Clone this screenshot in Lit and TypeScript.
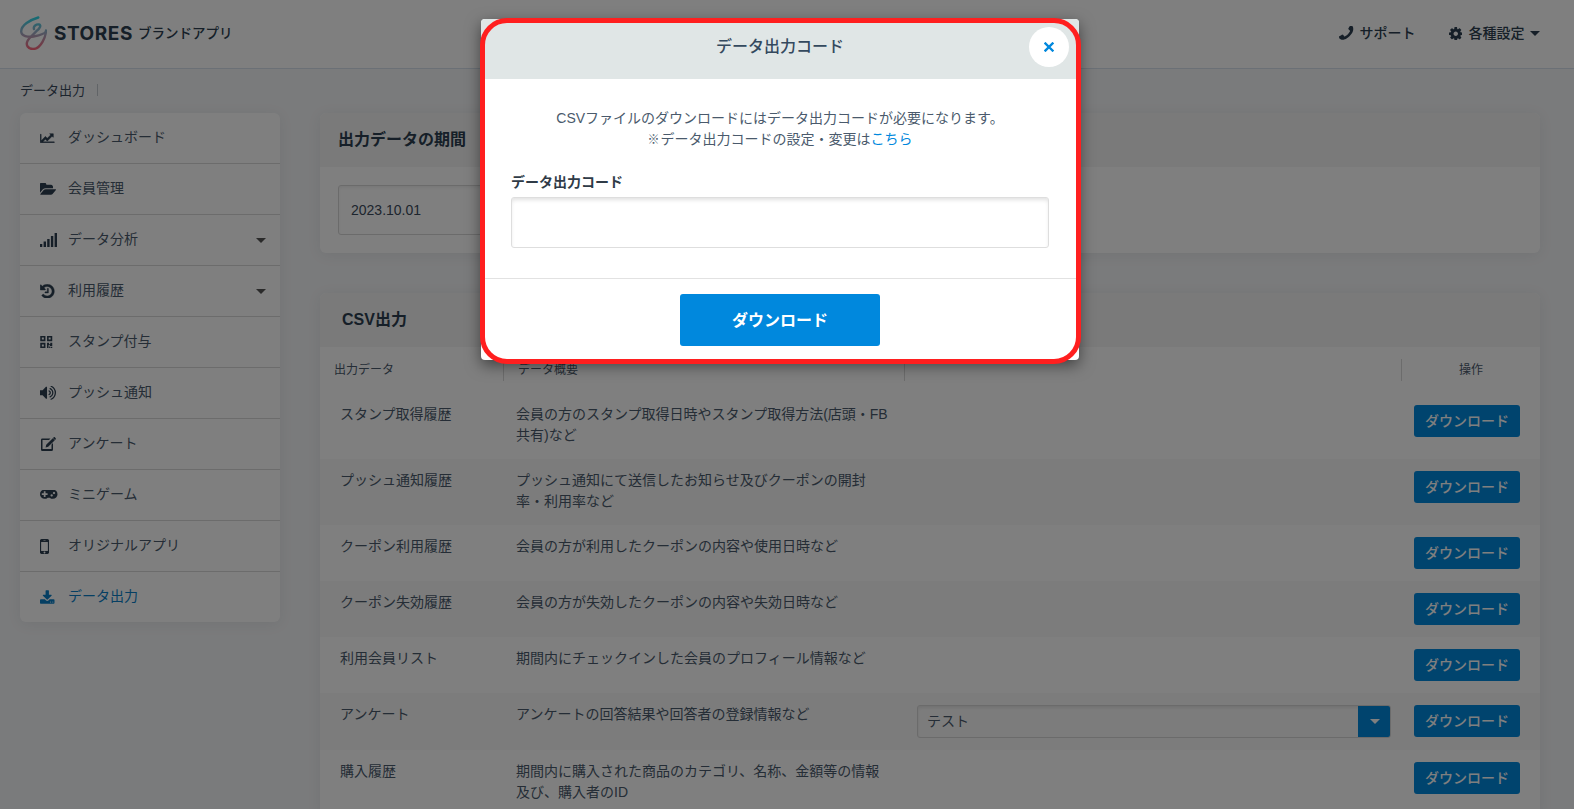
import { LitElement, css, html, svg } from 'lit';
import { customElement } from 'lit/decorators.js';

// Font Awesome 4 style glyphs, cropped tight so that w/h are the measured ink sizes.
// sw thickens a glyph that renders too light at this size.
const ICONS: Record<string, { vb: string; w: number; h: number; d: string; sw?: number }> = {
  chart: {
    vb: '-30 400 1980 1294', w: 14.5, h: 10.5, sw: 60,
    d: 'M1920 1536v128h-1920v-1152h128v1024h1792zm-128-1088v435q0 21-19.5 29.5t-35.5-7.5l-121-121-633 633q-10 10-23 10t-23-10l-233-233-416 416-192-192 585-585q10-10 23-10t23 10l233 233 464-464-121-121q-16-16-7.5-35.5t29.5-19.5h435q14 0 23 9t9 23z',
  },
  folder: {
    vb: '0 171 1845 1351', w: 16, h: 12,
    d: 'M1845 931q0 35-35 73l-336 396q-43 51-120.5 86.5t-143.5 35.5h-1088q-34 0-60.5-13t-26.5-43q0-35 35-73l336-396q43-51 120.5-86.5t143.5-35.5h1088q34 0 60.5 13t26.5 43zm-343-344v160h-832q-94 0-197 47.5t-164 119.5l-337 396-5 6q0-4-.5-12.5t-.5-12.5v-960q0-92 66-158t158-66h320q92 0 158 66t66 158v32h544q92 0 158 66t66 158z',
  },
  signal: {
    vb: '0 0 17 14', w: 17, h: 14,
    d: 'M0 11h2.300v3H0zM3.600 8.500h2.400V14H3.600zM7.200 6h2.400v8H7.200zM10.900 3h2.400v11h-2.400zM14.600 0H17v14h-2.400z',
  },
  history: {
    vb: '108 108 1576 1576', w: 14.5, h: 14.5, sw: 40,
    d: 'M1664 896q0 156-61 298t-164 245-245 164-298 61q-172 0-327-72.5t-264-204.5q-7-10-6.5-22.5t8.5-20.5l137-138q10-9 25-9 16 2 23 12 73 95 179 147t225 52q104 0 198.5-40.5t163.5-109.5 109.5-163.5 40.5-198.5-40.5-198.5-109.5-163.5-163.5-109.5-198.5-40.5q-98 0-188 35.5t-160 101.5l137 138q31 30 14 69-17 40-59 40h-448q-26 0-45-19t-19-45v-448q0-42 40-59 39-17 69 14l130 129q107-101 244.5-156.5t284.5-55.5q156 0 298 61t245 164 164 245 61 298zm-640-288v448q0 14-9 23t-23 9h-320q-14 0-23-9t-9-23v-64q0-14 9-23t23-9h224v-352q0-14 9-23t23-9h64q14 0 23 9t9 23z',
  },
  qr: {
    vb: '0 0 12 12', w: 12.5, h: 12,
    d: 'M0 0h5.200v5.200H0zM1.600 1.600v2h2v-2zM6.800 0H12v5.200H6.800zM8.400 1.600v2h2v-2zM0 6.800h5.200V12H0zM1.600 8.400v2h2v-2zM6.800 6.800h2v1.400H10V6.800h2V10H9.600V8.900H8.300V12H6.800zM10.400 10.800H12V12h-1.600zM8.900 10.600h1V12h-1z',
  },
  volume: {
    vb: '128 224 1600 1344', w: 16, h: 13.500,
    d: 'M832 352v1088q0 26-19 45t-45 19-45-19l-333-333h-262q-26 0-45-19t-19-45v-384q0-26 19-45t45-19h262l333-333q19-19 45-19t45 19 19 45zm384 544q0 76-42.5 141.5t-112.5 93.5q-10 5-25 5-26 0-45-18.5t-19-45.5q0-21 12-35.5t29-25 34-23 29-36 12-56.5-12-56.5-29-36-34-23-29-25-12-35.5q0-27 19-45.5t45-18.5q15 0 25 5 70 27 112.5 93t42.5 142zm256 0q0 153-85 282.5t-225 188.5q-13 5-25 5-27 0-46-19t-19-45q0-39 39-59 56-29 76-44 74-54 115.5-135.5t41.5-173.5-41.5-173.5-115.5-135.5q-20-15-76-44-39-20-39-59 0-26 19-45t45-19q13 0 26 5 140 59 225 188.5t85 282.5zm256 0q0 230-127 422.5t-338 283.5q-13 5-26 5-26 0-45-19t-19-45q0-36 39-59 7-4 22.5-10.5t22.5-10.5q46-25 82-51 123-91 192-227t69-289-69-289-192-227q-36-26-82-51-7-4-22.5-10.5t-22.5-10.5q-39-23-39-59 0-26 19-45t45-19q13 0 26 5 211 91 338 283.5t127 422.5z',
  },
  edit: {
    vb: '0 0 16 14', w: 16, h: 14,
    d: 'M2.300 1.500h8.200L9 3H2.500v9h9V7.600L13 6.100v6.400a1.500 1.500 0 0 1-1.500 1.500h-9.200A1.300 1.300 0 0 1 1 12.700V2.800a1.300 1.300 0 0 1 1.300-1.300zM12.800 1.200l2 2-6.600 6.600-2.600.6.600-2.600zM13.600.4c.4-.4 1-.4 1.400 0l.6.600c.4.4.4 1 0 1.400l-.6.600-2-2z',
  },
  gamepad: {
    vb: '0 512 1920 1024', w: 17.500, h: 9.500,
    d: 'M832 1024v-128q0-14-9-23t-23-9h-192v-192q0-14-9-23t-23-9h-128q-14 0-23 9t-9 23v192h-192q-14 0-23 9t-9 23v128q0 14 9 23t23 9h192v192q0 14 9 23t23 9h128q14 0 23-9t9-23v-192h192q14 0 23-9t9-23zm576 64q0-53-37.5-90.5t-90.5-37.5-90.5 37.5-37.5 90.5 37.5 90.5 90.5 37.5 90.5-37.5 37.5-90.5zm256-256q0-53-37.5-90.5t-90.5-37.5-90.5 37.5-37.5 90.5 37.5 90.5 90.5 37.5 90.5-37.5 37.5-90.5zm256 128q0 212-150 362t-362 150q-192 0-338-128h-220q-146 128-338 128-212 0-362-150t-150-362 150-362 362-150h896q212 0 362 150t150 362z',
  },
  mobile: {
    vb: '512 256 768 1280', w: 9, h: 15,
    d: 'M976 1408q0-33-23.5-56.5t-56.5-23.5-56.5 23.5-23.5 56.5 23.5 56.5 56.5 23.5 56.5-23.5 23.5-56.5zm208-160v-704q0-13-9.5-22.5t-22.5-9.5h-512q-13 0-22.5 9.5t-9.5 22.5v704q0 13 9.5 22.5t22.5 9.5h512q13 0 22.5-9.5t9.5-22.5zm-192-848q0-16-16-16h-160q-16 0-16 16t16 16h160q16 0 16-16zm288-16v1024q0 52-38 90t-90 38h-512q-52 0-90-38t-38-90v-1024q0-52 38-90t90-38h512q52 0 90 38t38 90z',
  },
  download: {
    vb: '64 0 1664 1536', w: 14.500, h: 14,
    d: 'M1344 1344q0-26-19-45t-45-19-45 19-19 45 19 45 45 19 45-19 19-45zm256 0q0-26-19-45t-45-19-45 19-19 45 19 45 45 19 45-19 19-45zm128-224v320q0 40-28 68t-68 28h-1472q-40 0-68-28t-28-68v-320q0-40 28-68t68-28h465l135 136q58 56 136 56t136-56l136-136h464q40 0 68 28t28 68zm-325-569q17 41-14 70l-448 448q-18 19-45 19t-45-19l-448-448q-31-29-14-70 17-39 59-39h256v-448q0-26 19-45t45-19h256q26 0 45 19t19 45v448h256q42 0 59 39z',
  },
  phone: {
    vb: '192 192 1408 1408', w: 14.500, h: 14.500,
    d: 'M1600 1240q0 27-10 70.5t-21 68.5q-21 50-122 106-94 51-186 51-27 0-53-3.5t-57.5-12.5-47-14.5-55.5-20.5-49-18q-98-35-175-83-127-79-264-216t-216-264q-48-77-83-175-3-9-18-49t-20.5-55.5-14.5-47-12.5-57.5-3.5-53q0-92 51-186 56-101 106-122 25-11 68.5-21t70.5-10q14 0 21 3 18 6 53 76 11 19 30 54t35 63.5 31 53.5q3 4 17.5 25t21.5 35.5 7 28.5q0 20-28.5 50t-62 55-62 53-28.5 46q0 9 5 22.5t8.5 20.5 14 24 11.5 19q76 137 174 235t235 174q2 1 19 11.5t24 14 20.5 8.5 22.5 5q18 0 46-28.5t53-62 55-62 50-28.5q14 0 28.5 7t35.5 21.5 25 17.5q25 15 53.5 31t63.5 35 54 30q70 35 76 53 3 7 3 21z',
  },
  cog: {
    vb: '128 128 1536 1536', w: 13.500, h: 13.500,
    d: 'M1152 896q0-106-75-181t-181-75-181 75-75 181 75 181 181 75 181-75 75-181zm512-109v222q0 12-8 23t-20 13l-185 28q-19 54-39 91 35 50 107 138 10 12 10 25t-9 23q-27 37-99 108t-94 71q-12 0-26-9l-138-108q-44 23-91 38-16 136-29 186-7 28-36 28h-222q-14 0-24.5-8.5t-11.5-21.5l-28-184q-49-16-90-37l-141 107q-10 9-25 9-14 0-25-11-126-114-165-168-7-10-7-23 0-12 8-23 15-21 51-66.5t54-70.5q-27-50-41-99l-183-27q-13-2-21-12.5t-8-23.5v-222q0-12 8-23t19-13l186-28q14-46 39-92-40-57-107-138-10-12-10-24 0-10 9-23 26-36 98.5-107.5t94.5-71.5q13 0 26 10l138 107q44-23 91-38 16-136 29-186 7-28 36-28h222q14 0 24.5 8.5t11.5 21.5l28 184q49 16 90 37l142-107q9-9 24-9 13 0 25 10 129 119 165 170 7 8 7 22 0 12-8 23-15 21-51 66.5t-54 70.5q26 50 41 98l183 28q13 2 21 12.5t8 23.5z',
  },
};

const icon = (name: string, cls = '') => {
  const i = ICONS[name];
  return html`<svg class="icon ${cls}" viewBox=${i.vb} width=${i.w} height=${i.h} fill="currentColor">
    ${svg`<path d=${i.d} stroke=${i.sw ? 'currentColor' : 'none'} stroke-width=${i.sw ?? 0}></path>`}
  </svg>`;
};

const NAV = [
  { icon: 'chart', label: 'ダッシュボード' },
  { icon: 'folder', label: '会員管理' },
  { icon: 'signal', label: 'データ分析', caret: true },
  { icon: 'history', label: '利用履歴', caret: true },
  { icon: 'qr', label: 'スタンプ付与' },
  { icon: 'volume', label: 'プッシュ通知' },
  { icon: 'edit', label: 'アンケート' },
  { icon: 'gamepad', label: 'ミニゲーム' },
  { icon: 'mobile', label: 'オリジナルアプリ' },
  { icon: 'download', label: 'データ出力', active: true },
];

const ROWS = [
  { name: 'スタンプ取得履歴', desc: '会員の方のスタンプ取得日時やスタンプ取得方法(店頭・FB共有)など' },
  { name: 'プッシュ通知履歴', desc: 'プッシュ通知にて送信したお知らせ及びクーポンの開封率・利用率など' },
  { name: 'クーポン利用履歴', desc: '会員の方が利用したクーポンの内容や使用日時など' },
  { name: 'クーポン失効履歴', desc: '会員の方が失効したクーポンの内容や失効日時など' },
  { name: '利用会員リスト', desc: '期間内にチェックインした会員のプロフィール情報など' },
  { name: 'アンケート', desc: 'アンケートの回答結果や回答者の登録情報など', select: 'テスト' },
  { name: '購入履歴', desc: '期間内に購入された商品のカテゴリ、名称、金額等の情報及び、購入者のID' },
];

@customElement('app-root')
export class AppRoot extends LitElement {
  render() {
    return html`
      <header class="topbar">
        <div class="brand">
          <svg class="logo" viewBox="0 0 27 34" width="27" height="34" fill="none">
            <defs>
              <linearGradient id="swirl" gradientUnits="userSpaceOnUse" x1="14" y1="0" x2="14" y2="34">
                <stop offset="0" stop-color="#20dcec"></stop>
                <stop offset="0.5" stop-color="#a0aac4"></stop>
                <stop offset="1" stop-color="#ff6278"></stop>
              </linearGradient>
            </defs>
            <path
              d="M18.300 1.500C10 4 1.200 9 1.200 15.500C1.200 20 8 21.500 13.500 20.500C19 19.500 26.500 18 26 14.500C26 20 21 33 13 33C8 33 5.500 29 7.500 25C9.500 21 14 18 16.500 15C20 12.500 21.500 9 19 8.500C16.500 8 13 10 14 13"
              stroke="url(#swirl)" stroke-width="2.400" stroke-linecap="round" stroke-linejoin="round"></path>
          </svg>
          <span class="wordmark">STORES</span>
          <span class="appname">ブランドアプリ</span>
        </div>
        <nav class="top-links">
          <a class="support">${icon('phone', 'flip')}サポート</a>
          <a class="settings">${icon('cog')}各種設定<i class="caret"></i></a>
        </nav>
      </header>

      <div class="crumbs"><span>データ出力</span><i class="crumb-sep"></i></div>

      <div class="columns">
        <aside class="side">
          ${NAV.map(
            (n) => html`
              <a class="nav-item ${n.active ? 'active' : ''}">
                <span class="nav-icon">${icon(n.icon)}</span>
                <span class="nav-label">${n.label}</span>
                ${n.caret ? html`<i class="caret nav-caret"></i>` : ''}
              </a>
            `,
          )}
        </aside>

        <main class="main">
          <section class="card period">
            <h2 class="card-head">出力データの期間</h2>
            <div class="period-body"><div class="date">2023.10.01</div></div>
          </section>

          <section class="card">
            <h2 class="card-head csv">CSV出力</h2>
            <div class="row thead">
              <div class="th">出力データ</div>
              <div class="th sep">データ概要</div>
              <div class="th sep"></div>
              <div class="th sep center">操作</div>
            </div>
            ${ROWS.map(
              (r) => html`
                <div class="row tbody">
                  <div class="td name">${r.name}</div>
                  <div class="td desc">${r.desc}</div>
                  <div class="td pick">
                    ${r.select
                      ? html`<div class="select">
                          <span class="select-text">${r.select}</span>
                          <span class="select-arrow"><i class="caret"></i></span>
                        </div>`
                      : ''}
                  </div>
                  <div class="td act"><button class="btn">ダウンロード</button></div>
                </div>
              `,
            )}
          </section>
        </main>
      </div>

      <div class="backdrop"></div>
      <div class="modal">
        <div class="modal-head">データ出力コード</div>
        <button class="close" aria-label="閉じる">
          <svg viewBox="0 0 10 10" width="10" height="10">
            <path d="M1.500 1.500l7 7M8.500 1.500l-7 7" stroke="currentColor" stroke-width="2.400" stroke-linecap="square"></path>
          </svg>
        </button>
        <div class="modal-body">
          <p class="lead">
            CSVファイルのダウンロードにはデータ出力コードが必要になります。<br />
            <span class="mark">※</span>データ出力コードの設定・変更は<a class="link">こちら</a>
          </p>
          <label class="field-label">データ出力コード</label>
          <div class="field"></div>
        </div>
        <div class="modal-foot"><button class="btn-primary">ダウンロード</button></div>
        <div class="highlight"></div>
      </div>
    `;
  }

  static styles = css`
    :host {
      display: block;
      position: relative;
      height: 100vh;
      overflow: hidden;
      background: #f5f6f8;
      color: #3b4a5c;
      font-family: 'Liberation Sans', 'Noto Sans CJK JP', sans-serif;
      font-size: 14px;
      line-height: 21px;
    }

    * {
      box-sizing: border-box;
    }

    .icon {
      display: block;
      flex: none;
    }

    .flip {
      transform: scaleX(-1);
    }

    .caret {
      display: block;
      flex: none;
      width: 0;
      height: 0;
      border-left: 5px solid transparent;
      border-right: 5px solid transparent;
      border-top: 5px solid currentColor;
    }

    /* top bar */
    .topbar {
      height: 69px;
      display: flex;
      align-items: center;
      justify-content: space-between;
      padding: 0 34px 1px 20px;
      background: #fff;
      border-bottom: 1px solid #d6e1ec;
    }

    .brand {
      display: flex;
      align-items: center;
      color: #2c3e50;
    }

    .logo {
      margin-top: -2px;
    }

    .wordmark {
      margin-left: 7px;
      font-family: Inter, 'Liberation Sans', sans-serif;
      font-size: 19px;
      font-weight: 700;
      letter-spacing: 0.55px;
    }

    .appname {
      margin-left: 5px;
      font-size: 13.5px;
      font-weight: 500;
    }

    .top-links {
      display: flex;
      align-items: center;
      gap: 33px;
      color: #2c3e50;
      font-weight: 500;
    }

    .support,
    .settings {
      display: flex;
      align-items: center;
      gap: 6.5px;
    }

    .settings .caret {
      margin-left: -1px;
      color: #2c3e50;
    }

    /* breadcrumb */
    .crumbs {
      height: 44px;
      display: flex;
      align-items: center;
      padding: 0 20px 2px;
      font-size: 13px;
    }

    .crumb-sep {
      width: 1px;
      height: 12px;
      margin-left: 12px;
      background: #c2c8cf;
    }

    .columns {
      display: flex;
      align-items: flex-start;
      gap: 40px;
      padding: 0 34px 0 20px;
    }

    /* side menu */
    .side {
      width: 260px;
      flex: none;
      background: #fff;
      border-radius: 6px;
      box-shadow: 0 2px 14px rgba(40, 50, 70, 0.08);
      overflow: hidden;
    }

    .nav-item {
      height: 51px;
      display: flex;
      align-items: center;
      padding: 0 14px 0 20px;
      border-top: 1px solid #d8d8d8;
      color: #4a5a6c;
    }

    .nav-item:first-child {
      height: 50px;
      border-top: 0;
    }

    .nav-icon {
      width: 28px;
      flex: none;
      color: #2c3e50;
    }

    .nav-label {
      flex: 1;
      padding-bottom: 1px;
    }

    .nav-caret {
      color: #555;
      border-left-width: 5.5px;
      border-right-width: 5.5px;
    }

    .nav-item.active,
    .nav-item.active .nav-icon {
      color: #0b7fc7;
    }

    /* cards */
    .main {
      flex: 1;
      min-width: 0;
      display: flex;
      flex-direction: column;
      gap: 40px;
    }

    .card {
      background: #fff;
      border-radius: 6px;
      box-shadow: 0 2px 14px rgba(40, 50, 70, 0.08);
      overflow: hidden;
    }

    .card-head {
      height: 54px;
      margin: 0;
      display: flex;
      align-items: center;
      padding: 0 18px 2px;
      background: #f4f4f4;
      color: #2c3e50;
      font-size: 16px;
      font-weight: 700;
    }

    .card-head.csv {
      padding-left: 22px;
    }

    .period-body {
      padding: 18px;
    }

    .date {
      width: 220px;
      height: 50px;
      display: flex;
      align-items: center;
      padding-left: 12px;
      border: 1px solid #d6d6d6;
      border-radius: 3px;
      box-shadow: inset 0 2px 3px rgba(0, 0, 0, 0.06);
    }

    /* table */
    .row {
      display: grid;
      grid-template-columns: 183px 401px 497px 139px;
    }

    .thead {
      height: 46px;
      align-items: center;
      font-size: 12px;
      color: #4a5a6c;
    }

    .th {
      height: 22px;
      line-height: 22px;
      padding-left: 14px;
    }

    .th.sep {
      border-left: 1px solid #d8d8d8;
    }

    .th.center {
      padding-left: 0;
      text-align: center;
    }

    .tbody {
      color: #4a5a6c;
    }

    .tbody:nth-child(even) {
      background: #f8f8f8;
    }

    .td {
      padding: 12px 0;
    }

    .name {
      padding-left: 20px;
      padding-top: 11px;
    }

    .desc {
      padding: 11px 14px 13px 13px;
    }

    .pick {
      padding-left: 13px;
      padding-right: 10px;
    }

    .act {
      padding-left: 13px;
      min-height: 56px;
    }

    .btn {
      display: block;
      width: 106px;
      height: 32px;
      padding: 0;
      border: 0;
      border-radius: 3px;
      background: #0088dd;
      color: #fff;
      font: inherit;
      font-weight: 500;
    }

    .select {
      height: 33px;
      display: flex;
      align-items: center;
      justify-content: space-between;
      border: 1px solid #d6d6d6;
      border-radius: 3px;
      box-shadow: inset 0 2px 3px rgba(0, 0, 0, 0.08);
      overflow: hidden;
    }

    .select-text {
      padding-left: 9px;
    }

    .select-arrow {
      width: 33px;
      align-self: stretch;
      margin: -1px;
      display: flex;
      align-items: center;
      justify-content: center;
      background: #0088dd;
      color: #fff;
    }

    /* dialog */
    .backdrop {
      position: absolute;
      inset: 0;
      background: rgba(0, 0, 0, 0.5);
    }

    .modal {
      position: absolute;
      top: 19px;
      left: 481px;
      width: 598px;
      height: 341px;
      display: flex;
      flex-direction: column;
      background: #fff;
      border-radius: 4px;
      box-shadow: 0 5px 15px rgba(0, 0, 0, 0.5);
    }

    .modal-head {
      height: 60px;
      flex: none;
      display: flex;
      align-items: center;
      justify-content: center;
      padding-bottom: 6px;
      border-radius: 4px 4px 0 0;
      background: #e0e6e6;
      color: #34495e;
      font-size: 16px;
      font-weight: 500;
    }

    .close {
      position: absolute;
      top: 8px;
      right: 10px;
      width: 40px;
      height: 40px;
      display: flex;
      align-items: center;
      justify-content: center;
      padding: 0;
      border: 0;
      border-radius: 50%;
      background: #fff;
      color: #0088dd;
    }

    .modal-body {
      flex: 1;
      padding: 29px 30px 0;
    }

    .lead {
      margin: 0 0 21px;
      text-align: center;
      color: #4a5a6c;
    }

    .mark {
      font-size: 12px;
      margin-right: 1px;
    }

    .link {
      color: #0088dd;
    }

    .field-label {
      display: block;
      height: 25px;
      font-weight: 700;
      color: #2f3b47;
    }

    .field {
      height: 51px;
      border: 1px solid #dedede;
      border-radius: 3px;
      box-shadow: inset 0 3px 4px -1px rgba(0, 0, 0, 0.12);
    }

    .modal-foot {
      height: 82px;
      flex: none;
      display: flex;
      justify-content: center;
      padding-top: 15px;
      border-top: 1px solid #e2e2e2;
    }

    .btn-primary {
      width: 200px;
      height: 52px;
      padding: 0;
      border: 0;
      border-radius: 3px;
      background: #0088dd;
      color: #fff;
      font: inherit;
      font-size: 16px;
      font-weight: 700;
    }

    /* red annotation ring drawn on top of the dialog */
    .highlight {
      position: absolute;
      top: -1px;
      left: -1.5px;
      width: 601.5px;
      height: 346px;
      border: 5.5px solid #ff1f1f;
      border-radius: 27px;
      pointer-events: none;
    }
  `;
}

declare global {
  interface HTMLElementTagNameMap {
    'app-root': AppRoot;
  }
}
